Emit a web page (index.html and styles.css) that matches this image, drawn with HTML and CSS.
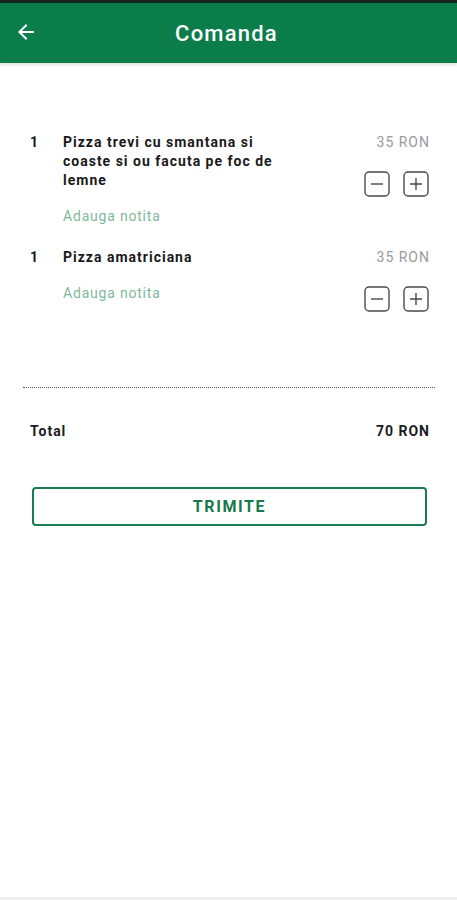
FILE: index.html
```html
<!DOCTYPE html>
<html lang="ro">
<head>
    <meta charset="UTF-8">
    <meta name="viewport" content="width=device-width, initial-scale=1.0">
    <title>Comanda</title>
    <link rel="stylesheet" href="styles.css">
</head>
<body>
    <div class="status-bar"></div>

    <header class="app-bar">
        <button class="back-btn" aria-label="Inapoi">
            <svg width="24" height="24" viewBox="0 0 24 24"><path d="M20 11H7.83l5.59-5.59L12 4l-8 8 8 8 1.41-1.41L7.83 13H20v-2z" fill="#fff"/></svg>
        </button>
        <h1>Comanda</h1>
    </header>

    <main class="order">
        <div class="order-item">
            <div class="qty">1</div>
            <div class="info">
                <div class="name">Pizza trevi cu smantana si coaste si ou facuta pe foc de lemne</div>
                <div class="note">Adauga notita</div>
            </div>
            <div class="side">
                <div class="price">35 RON</div>
                <div class="stepper">
                    <button class="step" aria-label="Scade">
                        <svg width="26" height="26" viewBox="0 0 26 26"><rect x="1" y="1" width="24" height="24" rx="4" fill="none" stroke="#4a4a4a" stroke-width="1.4"/><path d="M7 13h12" stroke="#4a4a4a" stroke-width="1.4"/></svg>
                    </button>
                    <button class="step" aria-label="Adauga">
                        <svg width="26" height="26" viewBox="0 0 26 26"><rect x="1" y="1" width="24" height="24" rx="4" fill="none" stroke="#4a4a4a" stroke-width="1.4"/><path d="M7 13h12M13 7v12" stroke="#4a4a4a" stroke-width="1.4"/></svg>
                    </button>
                </div>
            </div>
        </div>

        <div class="order-item">
            <div class="qty">1</div>
            <div class="info">
                <div class="name">Pizza amatriciana</div>
                <div class="note">Adauga notita</div>
            </div>
            <div class="side">
                <div class="price">35 RON</div>
                <div class="stepper">
                    <button class="step" aria-label="Scade">
                        <svg width="26" height="26" viewBox="0 0 26 26"><rect x="1" y="1" width="24" height="24" rx="4" fill="none" stroke="#4a4a4a" stroke-width="1.4"/><path d="M7 13h12" stroke="#4a4a4a" stroke-width="1.4"/></svg>
                    </button>
                    <button class="step" aria-label="Adauga">
                        <svg width="26" height="26" viewBox="0 0 26 26"><rect x="1" y="1" width="24" height="24" rx="4" fill="none" stroke="#4a4a4a" stroke-width="1.4"/><path d="M7 13h12M13 7v12" stroke="#4a4a4a" stroke-width="1.4"/></svg>
                    </button>
                </div>
            </div>
        </div>

        <hr class="divider">

        <div class="total">
            <span>Total</span>
            <span>70 RON</span>
        </div>

        <button class="send-btn">TRIMITE</button>
    </main>

    <div class="nav-strip"></div>
</body>
</html>
```

FILE: styles.css
```css
html, body {
    height: 100%;
}

body {
    margin: 0;
    padding: 0;
    background-color: #ffffff;
    color: #1c1c1c;
    font-family: Roboto, "Noto Sans", sans-serif;
    font-size: 14px;
    letter-spacing: 1px;
    display: flex;
    flex-direction: column;
}

button {
    font-family: inherit;
    background: none;
    border: none;
    padding: 0;
    cursor: pointer;
}

.status-bar {
    height: 3px;
    background-color: #17251d;
}

.app-bar {
    position: relative;
    height: 60px;
    background-color: #0b7d4a;
    display: flex;
    align-items: center;
    justify-content: center;
    box-shadow: 0 2px 3px rgba(0, 0, 0, 0.12);
}

.back-btn {
    position: absolute;
    left: 14px;
    top: 17px;
    width: 24px;
    height: 24px;
}

.app-bar h1 {
    margin: 0 0 0 -4px;
    color: #ffffff;
    font-size: 22px;
    font-weight: 500;
    letter-spacing: 1.2px;
}

.order {
    flex: 1;
    padding: 70px 28px 0 30px;
}

.order-item {
    display: flex;
    align-items: flex-start;
    margin-bottom: 22px;
    line-height: 19px;
}

.qty {
    width: 33px;
    font-weight: 700;
}

.info {
    width: 220px;
}

.name {
    font-weight: 700;
    color: #1a1a1a;
}

.note {
    margin-top: 17px;
    color: #7fb99b;
    letter-spacing: 0.8px;
}

.side {
    flex: 1;
    display: flex;
    flex-direction: column;
    align-items: flex-end;
}

.price {
    color: #9a9a9a;
    margin-right: -1px;
}

.stepper {
    display: flex;
    gap: 13px;
    margin-top: 19px;
}

.step {
    width: 26px;
    height: 26px;
    display: block;
}

.step svg {
    display: block;
}

.divider {
    margin: 75px -6px 0 -7px;
    border: none;
    border-top: 1px dotted #555555;
}

.total {
    display: flex;
    justify-content: space-between;
    margin: 34px -1px 0 0;
    font-weight: 700;
    line-height: 19px;
}

.send-btn {
    display: block;
    width: 395px;
    height: 39px;
    margin: 46px 0 0 2px;
    border: 2px solid #1a7d4e;
    border-radius: 4px;
    color: #177a4b;
    font-size: 16px;
    font-weight: 700;
    letter-spacing: 1.6px;
}

.nav-strip {
    height: 3px;
    background-color: #eeeeee;
}
```
